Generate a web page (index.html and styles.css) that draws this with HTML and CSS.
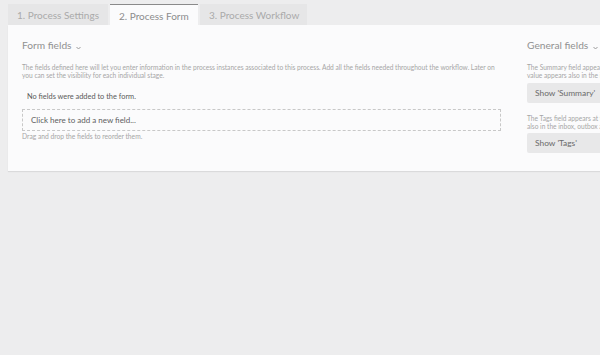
FILE: index.html
```html
<!doctype html>
<html>
<head>
<link rel="stylesheet" href="styles.css">
</head>
<body>
<div class="tabs">
	<div class="tab">1. Process Settings</div>
	<div class="tab active">2. Process Form</div>
	<div class="tab">3. Process Workflow</div>
</div>
<div class="panel">
	<div class="main">
		<div class="title">Form fields <svg class="caret" width="5" height="4" viewBox="0 0 5 4"><path d="M0.5 1 L2.5 3 L4.5 1" fill="none" stroke="#9a9a9a" stroke-width="1"/></svg></div>
		<p class="desc">The fields defined here will let you enter information in the process instances associated to this process. Add all the fields needed throughout the workflow. Later on you can set the visibility for each individual stage.</p>
		<div class="empty">No fields were added to the form.</div>
		<div class="addfield">Click here to add a new field...</div>
		<div class="hint">Drag and drop the fields to reorder them.</div>
	</div>
	<div class="side">
		<div class="title">General fields <svg class="caret" width="5" height="4" viewBox="0 0 5 4"><path d="M0.5 1 L2.5 3 L4.5 1" fill="none" stroke="#9a9a9a" stroke-width="1"/></svg></div>
		<p class="desc">The Summary field appears at the top of each instance and its<br>value appears also in the inbox, outbox and tasks.</p>
		<div class="btn">Show 'Summary'</div>
		<p class="desc">The Tags field appears at the top of each instance and its value appears<br>also in the inbox, outbox and tasks.</p>
		<div class="btn">Show 'Tags'</div>
	</div>
</div>
</body>
</html>
```
FILE: styles.css
```css
body{
	margin:0px;
	padding:0px;
	background:#ededee;
	font-family:Lato, "Open Sans", "Liberation Sans", sans-serif;
	overflow:hidden;
	width:600px;
	height:355px;
}
.tabs{
	display:flex;
	gap:2px;
	padding:4px 0 0 8px;
}
.tab{
	height:21px;
	line-height:22px;
	padding:0 9px;
	background:#e6e6e7;
	color:#aaaaaa;
	font-size:10px;
	white-space:nowrap;
}
.tab:first-child{
	width:82px;
}
.tab.active{
	background:#fbfbfc;
	color:#8c8c8c;
	border-top:1px solid #8a8a8a;
	height:20px;
	width:70px;
}
.tab:last-child{
	width:89px;
}
.panel{
	display:grid;
	grid-template-columns:479px 250px;
	column-gap:26px;
	width:740px;
	margin-left:8px;
	padding:11px 0 18px 14px;
	background:#fbfbfc;
	box-shadow:0 1px 1px rgba(0,0,0,0.08);
}
.title{
	font-size:10.2px;
	color:#919191;
	height:18px;
	line-height:18px;
}
.caret{
	margin-left:2px;
	vertical-align:-1px;
}
.desc{
	margin:9px 0 0 0;
	font-size:6.6px;
	line-height:8.3px;
	color:#a6a6a6;
}
.side .desc{
	white-space:nowrap;
}
.empty{
	margin:11px 0 0 5px;
	font-size:7.4px;
	color:#5a5a5a;
	line-height:12px;
}
.addfield{
	margin-top:6px;
	height:20px;
	line-height:20px;
	border:1px dashed #c8c8c8;
	padding-left:8px;
	font-size:8px;
	color:#5e5e5e;
}
.hint{
	margin-top:1px;
	font-size:6.7px;
	line-height:9px;
	color:#a6a6a6;
}
.btn{
	margin-top:3px;
	height:20px;
	line-height:20px;
	padding-left:8px;
	background:#e8e8e9;
	color:#6a6a6a;
	font-size:8.4px;
	border-radius:2px;
}
.side .btn + .desc{
	margin-top:11px;
}
```
